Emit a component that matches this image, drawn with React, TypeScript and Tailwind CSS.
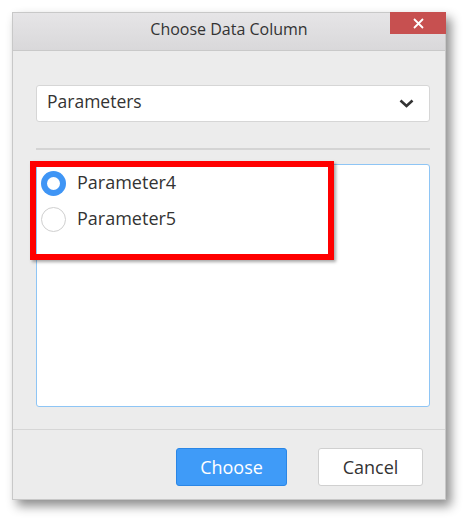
import React from "react";

export default function App() {
  const font = { fontFamily: '"Open Sans", "Noto Sans", sans-serif' };
  return (
    <div className="w-[466px] h-[520px] bg-white pt-[12px] pl-[12px]" style={font}>
      <div className="w-[434px] h-[488px] bg-[#ececec] flex flex-col shadow-[5px_6px_10px_rgba(0,0,0,0.45)] border border-[#c8c8c8]">
        {/* Title bar */}
        <div className="relative h-[38px] shrink-0 bg-gradient-to-b from-[#e6e5e7] to-[#d9d8da] border-b border-[#c9c9c9] flex items-center justify-center pb-[5px]">
          <span className="text-[16px] text-[#333333] leading-none">Choose Data Column</span>
          <div className="absolute top-[-1px] right-[-1px] w-[56px] h-[22px] bg-[#c75050] flex items-center justify-center">
            <svg width="11" height="11" viewBox="0 0 11 11">
              <path d="M1 1 L10 10 M10 1 L1 10" stroke="white" strokeWidth="1.8" />
            </svg>
          </div>
        </div>

        {/* Body */}
        <div className="flex-1 pl-[23px] pr-[15px] flex flex-col">
          <div className="mt-[34px] h-[37px] bg-white border border-[#d6d6d6] rounded-[3px] flex items-center justify-between pl-[10px] pr-[15px] pb-[3px]">
            <span className="text-[17.5px] text-[#333333] leading-none">Parameters</span>
            <svg width="15" height="9" viewBox="0 0 15 9" className="mt-[3px]">
              <path d="M1.5 1.5 L7.5 7 L13.5 1.5" stroke="#333" strokeWidth="2.6" fill="none" />
            </svg>
          </div>
          <div className="mt-[26px] h-[2px] bg-[#d4d4d4]" />
          <div className="relative mt-[14px] h-[243px] bg-white border border-[#8ec5f5] rounded-[3px]">
            <div className="flex items-center h-[36px] pl-[4px] gap-[11px]">
              <div className="w-[25px] h-[25px] rounded-full bg-[#3f95f5] flex items-center justify-center">
                <div className="w-[13px] h-[13px] rounded-full bg-white" />
              </div>
              <span className="text-[18px] text-[#333333] leading-none pb-[2px]">Parameter4</span>
            </div>
            <div className="flex items-center h-[36px] pl-[4px] gap-[11px]">
              <div className="w-[25px] h-[25px] rounded-full bg-white border border-[#cfcfcf]" />
              <span className="text-[18px] text-[#333333] leading-none pb-[2px]">Parameter5</span>
            </div>
            <div className="absolute left-[-7px] top-[-4px] w-[304px] h-[99px] border-[6px] border-[#ff0000] shadow-[2px_2px_3px_rgba(0,0,0,0.35)]" />
          </div>
        </div>

        {/* Footer */}
        <div className="mt-[22px] h-[71px] border-t border-[#d6d6d6] flex justify-end items-start pt-[18px] pr-[22px] gap-[31px]">
          <button className="w-[111px] h-[38px] bg-[#3f9bf8] border border-[#2a86e6] rounded-[3px] text-white text-[18px]">
            Choose
          </button>
          <button className="w-[105px] h-[38px] bg-white border border-[#d0d0d0] rounded-[3px] text-[#333333] text-[18px]">
            Cancel
          </button>
        </div>
      </div>
    </div>
  );
}
